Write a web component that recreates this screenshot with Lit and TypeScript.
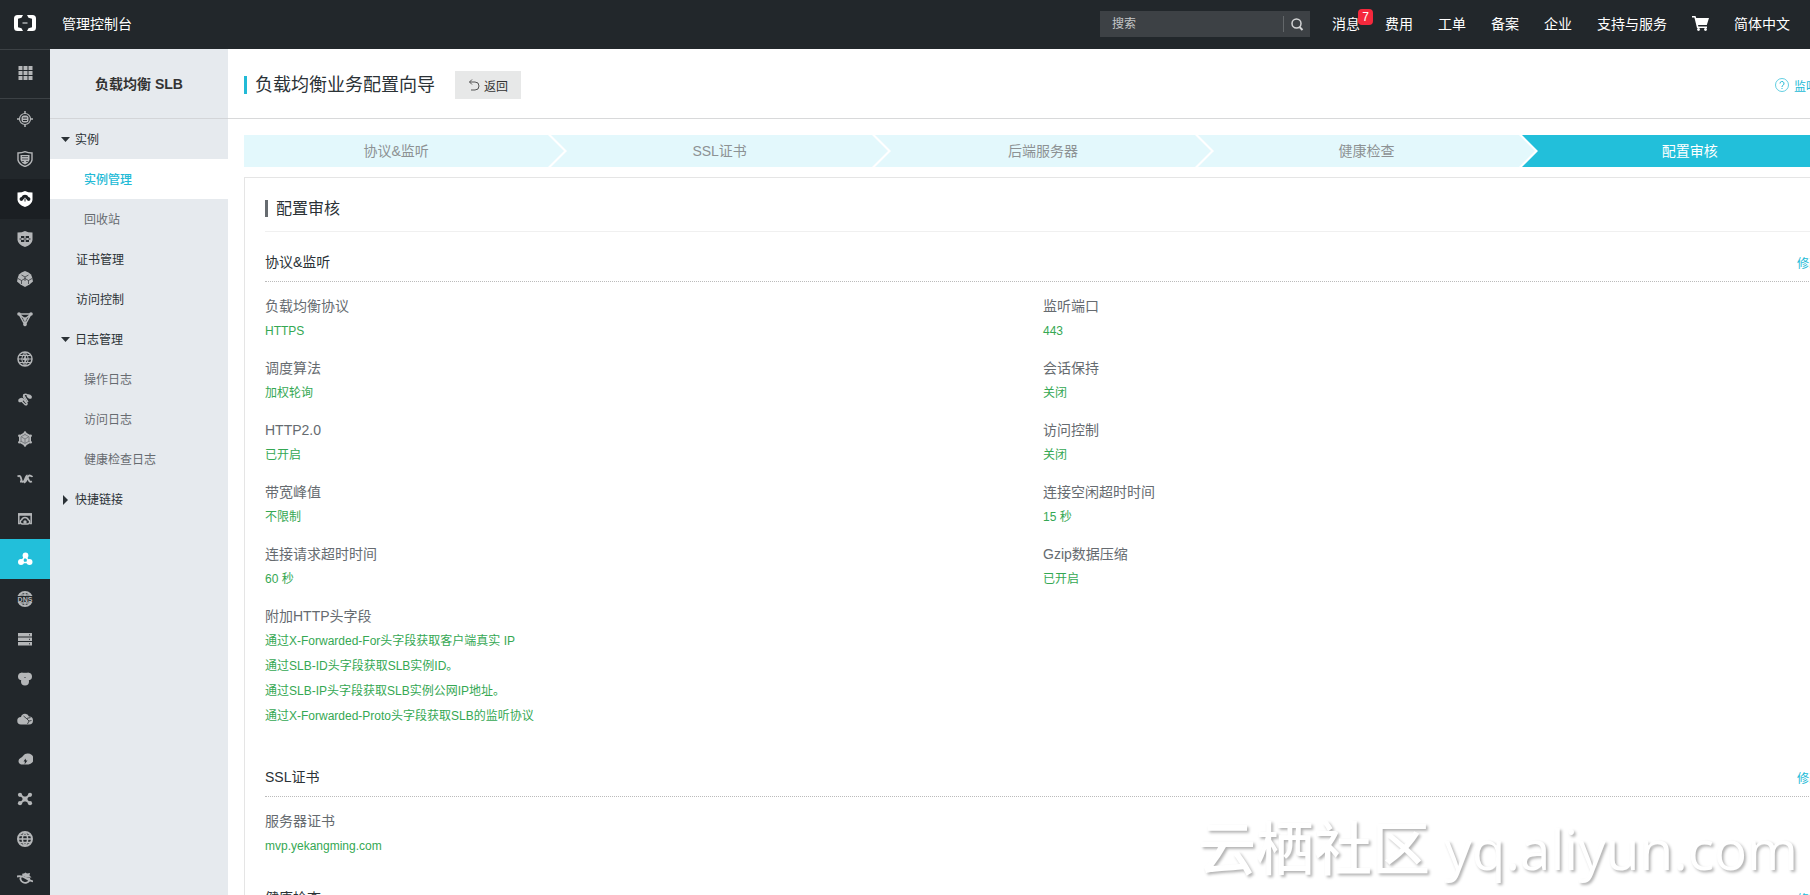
import { LitElement, html, svg, css } from "lit";
import { customElement } from "lit/decorators.js";
import { classMap } from "lit/directives/class-map.js";

type Field = { label: string; values: string[] };

const productIcons = [
  {
    name: "安全中心",
    art: svg`<circle cx="8" cy="8" r="5.500" fill="none" stroke="currentColor" stroke-width="1.200"/><path d="M8 0v3M8 13v3M0 8h3M13 8h3" stroke="currentColor" stroke-width="1.500"/><rect x="4.500" y="4.500" width="7" height="7" rx="2.500" fill="currentColor"/><path d="M6 7h4M6 9.500h4" stroke="#22272b"/>`,
  },
  {
    name: "证书服务",
    art: svg`<path d="M8 .7Q11 2 15 2v7q-1 4.500-7 6.500Q2 13.500 1 9V2Q5 2 8 .7z" fill="none" stroke="currentColor" stroke-width="1.400"/><path d="M3.500 4h9v5q-1 3-4.500 4.500Q4.500 12 3.500 9z" fill="currentColor"/><path d="M5 5.500h6M5 8h6M5 10.500h2M9 10.500h2" stroke="#22272b" stroke-width=".7"/>`,
  },
  {
    name: "云盾",
    active: "dark",
    art: svg`<path d="M8 0Q11 1.500 15.500 1.500V9Q15 13.500 8 16 1 13.500.5 9V1.500Q5 1.500 8 0z" fill="currentColor"/><path d="M3 9.500A2.500 2.500 0 0 1 4.500 6 3.800 3.800 0 0 1 11.500 6 2.500 2.500 0 0 1 13 9.500L11 10 8 6.500 5 10z" fill="#1b1f23"/><path d="M8 7.500v3" stroke="#1b1f23"/>`,
  },
  {
    name: "Web应用防火墙",
    art: svg`<path d="M8 0Q11 1.500 15.500 1.500V9Q15 13.500 8 16 1 13.500.5 9V1.500Q5 1.500 8 0z" fill="currentColor"/><path d="M4 5h3.300v2H4zM8.700 5H12v2H8.700zM4 9h3.300v2H4zM8.700 9H12v2H8.700zM2.500 7.500h2v1h-2zM6.500 7.500h3v1h-3zM11.500 7.500h2v1h-2z" fill="#22272b"/>`,
  },
  {
    name: "容器服务",
    art: svg`<path d="M8 0l3.500 1.500L14 3.500 15 6l1 4.500-3.500 3L8 16l-4.500-2.500L0 10.500 1 6l1-2.500 2.500-2z" fill="currentColor"/><path d="M4.500 4L8 6l3.500-2M8 6v4M1 7.500l3.500 2L8 7.500l3.500 2 3.500-2M4.500 9.500V13M11.500 9.500V13" fill="none" stroke="#22272b" stroke-width=".7"/>`,
  },
  {
    name: "专有网络",
    art: svg`<path d="M2 3h12L8 14zM2 3l6 5 6-5M8 8v6" fill="none" stroke="currentColor" stroke-width="1.500"/><circle cx="2" cy="3" r="1.800" fill="currentColor"/><circle cx="14" cy="3" r="1.800" fill="currentColor"/><circle cx="8" cy="8" r="1.800" fill="currentColor"/><circle cx="8" cy="13.500" r="1.800" fill="currentColor"/>`,
  },
  {
    name: "全站加速",
    art: svg`<circle cx="8" cy="8" r="7" fill="none" stroke="currentColor" stroke-width="1.500"/><path d="M1 8h14M2.500 4.500h11M2.500 11.500h11M8 1v14M8 1Q1.500 8 8 15M8 1q6.500 7 0 14" fill="none" stroke="currentColor"/><path d="M9.500 3.500L5.500 9H8l-1 4 4-5.500H8.500z" fill="currentColor"/>`,
  },
  {
    name: "高速通道",
    art: svg`<path d="M4 9.500l4 4q2 1 2-1L6.500 5.500q0-3 3-2L13 6" fill="none" stroke="currentColor" stroke-width="1.500"/><path d="M6 8l3.500 4M6.500 3.500L11 11" stroke="currentColor" stroke-width="1.300"/><ellipse cx="3.800" cy="9" rx="2.800" ry="2" transform="rotate(-30 3.800 9)" fill="currentColor"/><ellipse cx="12.300" cy="5.500" rx="2.800" ry="2" transform="rotate(30 12.300 5.500)" fill="currentColor"/>`,
  },
  {
    name: "弹性计算",
    art: svg`<path d="M8 1l6 3.500v7L8 15l-6-3.500v-7z" fill="currentColor"/><path d="M8 3.500l4 2.300v4.400l-4 2.300-4-2.300V5.800zM8 8v4M4.500 6L8 8l3.500-2M8 1v3M2 11.500L4.500 10M14 11.500L11.500 10" fill="none" stroke="#6c7073" stroke-width=".8"/><circle cx="8" cy="1.500" r="1.200" fill="currentColor"/><circle cx="2.300" cy="4.700" r="1.200" fill="currentColor"/><circle cx="13.700" cy="4.700" r="1.200" fill="currentColor"/><circle cx="2.300" cy="11.300" r="1.200" fill="currentColor"/><circle cx="13.700" cy="11.300" r="1.200" fill="currentColor"/><circle cx="8" cy="14.500" r="1.200" fill="currentColor"/>`,
  },
  {
    name: "日志服务",
    art: svg`<path d="M.5 5.500C4 3 4 8 5 10.500c3 2 3-6 5.500-6M7 11.500c3 0 3-7 5.500-7 1.500 0 2 1.500 3 .5M10 6c2 1 1 6 5 4.500M3 10.500h2" fill="none" stroke="currentColor" stroke-width="1.800"/>`,
  },
  {
    name: "云监控",
    art: svg`<path d="M3.500 12.500H1.800V3h12.400v9.500H12.500" fill="none" stroke="currentColor" stroke-width="1.500"/><path d="M1 3.500h14" stroke="currentColor" stroke-width="2.500"/><path d="M5 13a2.200 2.200 0 0 1-.3-4.200 3.500 3.500 0 0 1 6.600 0A2.200 2.200 0 0 1 11 13z" fill="none" stroke="currentColor" stroke-width="1.500"/><circle cx="8" cy="11" r="1.700" fill="currentColor"/>`,
  },
  {
    name: "负载均衡",
    active: "blue",
    art: svg`<path d="M8 5L4 11.500h9z" fill="none" stroke="currentColor" stroke-width="1.500"/><circle cx="8.500" cy="4.500" r="2.900" fill="currentColor"/><circle cx="4" cy="11" r="3" fill="currentColor"/><circle cx="12.500" cy="11" r="3" fill="currentColor"/>`,
  },
  {
    name: "云解析",
    art: svg`<circle cx="8" cy="8" r="7" fill="none" stroke="currentColor" stroke-width="2"/><path d="M8 1v14M2 4h12M2 12h12" stroke="currentColor" stroke-width="1.500"/><path d="M0 5h16v6H0z" fill="#22272b"/><text x="8" y="10.500" text-anchor="middle" font-size="7" font-weight="700" fill="currentColor">DNS</text>`,
  },
  {
    name: "云服务器",
    art: svg`<path d="M1 2h14v3.500H1zM1 6.500h14V10H1zM1 11h14v3.500H1z" fill="currentColor"/><path d="M12 3.800h1M12 8.300h1M12 12.800h1" stroke="#22272b"/>`,
  },
  {
    name: "对象存储",
    art: svg`<circle cx="4.800" cy="5.500" r="3.800" fill="currentColor"/><circle cx="11.200" cy="5.500" r="3.800" fill="currentColor"/><circle cx="8" cy="10.500" r="4" fill="currentColor"/><path d="M4 1.800h8v6H4z" fill="currentColor"/><circle cx="8" cy="6.500" r=".6" fill="#22272b"/>`,
  },
  {
    name: "CDN",
    art: svg`<path d="M4 13.500a3.700 3.700 0 0 1 0-7.500 4.200 4.200 0 0 1 8-.5 4 4 0 0 1 0 8z" fill="currentColor"/><path d="M6.500 5l3 2.500 4-1M9.500 7.500L12 10l2.500-.5M12 10l-1.500 3" fill="none" stroke="#22272b" stroke-width=".8"/>`,
  },
  {
    name: "云数据库",
    art: svg`<path d="M4 13.500a3.500 3.500 0 0 1-.5-6.500C6 6 6.500 2.500 10.500 2.500a5.200 5.200 0 0 1 1 11z" fill="currentColor"/><path d="M8.500 7.500L6.500 10.500h1.500L7.500 13.500l3-4H9z" fill="#22272b"/>`,
  },
  {
    name: "弹性伸缩",
    art: svg`<path d="M3 3.500l10 9M13 3.500l-10 9" stroke="currentColor" stroke-width="2"/><rect x="5.500" y="5.500" width="5" height="5" rx="1.500" fill="currentColor"/><circle cx="3" cy="3.800" r="2.100" fill="currentColor"/><circle cx="13" cy="3.800" r="2.100" fill="currentColor"/><circle cx="3" cy="12.200" r="2.100" fill="currentColor"/><circle cx="13" cy="12.200" r="2.100" fill="currentColor"/>`,
  },
  {
    name: "域名",
    art: svg`<circle cx="8" cy="8" r="7" fill="none" stroke="currentColor" stroke-width="2"/><path d="M1 8h14M2.500 4.500h11M2.500 11.500h11M8 1Q2.500 8 8 15M8 1q5.500 7 0 14" fill="none" stroke="currentColor" stroke-width="1.500"/>`,
  },
  {
    name: "数据传输",
    art: svg`<path d="M5 4.500l.5-2H7l1.500-1L10 2.500l3-.5-.5 2.500 2 2-5 0z" fill="currentColor"/><path d="M4 5.500a4.500 4 0 1 0 8.500 4M0 5.500q5-1 8.500 1.500t7.500 3.500" fill="none" stroke="currentColor" stroke-width="1.800"/><path d="M7 6l6 1 .5 3z" fill="currentColor"/>`,
  },
];

const navItems = [
  { text: "实例", kind: "group open" },
  { text: "实例管理", kind: "child current" },
  { text: "回收站", kind: "child" },
  { text: "证书管理", kind: "leaf" },
  { text: "访问控制", kind: "leaf" },
  { text: "日志管理", kind: "group open" },
  { text: "操作日志", kind: "child" },
  { text: "访问日志", kind: "child" },
  { text: "健康检查日志", kind: "child" },
  { text: "快捷链接", kind: "group closed" },
];

const steps = ["协议&监听", "SSL证书", "后端服务器", "健康检查", "配置审核"];

const sections: { title: string; fields: Field[] }[] = [
  {
    title: "协议&监听",
    fields: [
      { label: "负载均衡协议", values: ["HTTPS"] },
      { label: "监听端口", values: ["443"] },
      { label: "调度算法", values: ["加权轮询"] },
      { label: "会话保持", values: ["关闭"] },
      { label: "HTTP2.0", values: ["已开启"] },
      { label: "访问控制", values: ["关闭"] },
      { label: "带宽峰值", values: ["不限制"] },
      { label: "连接空闲超时时间", values: ["15 秒"] },
      { label: "连接请求超时时间", values: ["60 秒"] },
      { label: "Gzip数据压缩", values: ["已开启"] },
      {
        label: "附加HTTP头字段",
        values: [
          "通过X-Forwarded-For头字段获取客户端真实 IP",
          "通过SLB-ID头字段获取SLB实例ID。",
          "通过SLB-IP头字段获取SLB实例公网IP地址。",
          "通过X-Forwarded-Proto头字段获取SLB的监听协议",
        ],
      },
    ],
  },
  { title: "SSL证书", fields: [{ label: "服务器证书", values: ["mvp.yekangming.com"] }] },
  { title: "健康检查", fields: [] },
];

@customElement("console-topbar")
export class ConsoleTopbar extends LitElement {
  static styles = css`
    :host {
      display: flex;
      align-items: center;
      height: 48px;
      padding-bottom: 1px;
      flex: none;
      background: #22272b;
      color: #fff;
      font-size: 14px;
    }
    a {
      padding-bottom: 2px;
      color: inherit;
      text-decoration: none;
      white-space: nowrap;
    }
    svg {
      display: block;
    }
    .logo {
      display: flex;
      justify-content: center;
      width: 50px;
    }
    .title {
      margin-left: 12px;
    }
    .search {
      display: flex;
      align-items: center;
      width: 210px;
      height: 26px;
      margin-left: auto;
      background: #3d4145;
    }
    .search input {
      flex: 1;
      min-width: 0;
      height: 16px;
      padding: 0 12px;
      border: 0;
      border-right: 1px solid #63676a;
      background: none;
      color: #fff;
      font: inherit;
      font-size: 12px;
      outline: none;
    }
    .search input::placeholder {
      color: #c4c6c8;
      opacity: 1;
    }
    .search button {
      display: flex;
      justify-content: center;
      width: 26px;
      padding: 0;
      border: 0;
      background: none;
      color: #d4d5d6;
    }
    .menu {
      display: flex;
      align-items: center;
      gap: 25px;
      padding: 0 20px 0 22px;
    }
    .message {
      position: relative;
    }
    .badge {
      position: absolute;
      left: 26px;
      top: -4px;
      width: 15px;
      border-radius: 4px;
      background: #f5283c;
      font-size: 12px;
      line-height: 16px;
      text-align: center;
    }
  `;

  render() {
    return html`
      <a class="logo" href="#" aria-label="首页">
        <svg width="24" height="18" viewBox="0 0 24 18" fill="#fff">
          <path d="M10 1H4.500a3.500 3.500 0 0 0-3.500 3.500v9A3.500 3.500 0 0 0 4.500 17H10l-1.500-2.800-3.500-1v-8.400l3.500-1z" />
          <path d="M14 1h5.500A3.500 3.500 0 0 1 23 4.500v9a3.500 3.500 0 0 1-3.500 3.500H14l1.500-2.800 3.500-1v-8.400l-3.500-1z" />
          <path d="M9.500 8h5v2h-5z" fill="#888c8f" />
        </svg>
      </a>
      <a class="title" href="#">管理控制台</a>
      <form class="search" role="search">
        <input type="text" placeholder="搜索" aria-label="搜索" />
        <button type="button" aria-label="搜索">
          <svg width="14" height="14" viewBox="0 0 14 14" fill="none" stroke="currentColor">
            <circle cx="6.500" cy="6.500" r="4.500" stroke-width="1.500" />
            <path d="M9.500 10l3 3" stroke-width="2" />
          </svg>
        </button>
      </form>
      <nav class="menu">
        <a class="message" href="#">消息<span class="badge">7</span></a>
        <a href="#">费用</a>
        <a href="#">工单</a>
        <a href="#">备案</a>
        <a href="#">企业</a>
        <a href="#">支持与服务</a>
        <a href="#" aria-label="购物车">
          <svg width="17" height="15" viewBox="0 0 17 15" fill="#fff">
            <path d="M0 0h3.500l.7 2H17l-2.200 7H6l.4 1.500h8.600V12H5L2.400 1.500H0z" />
            <circle cx="6.500" cy="13.500" r="1.400" />
            <circle cx="13.500" cy="13.500" r="1.400" />
          </svg>
        </a>
        <a href="#">简体中文</a>
      </nav>
    `;
  }
}

@customElement("product-rail")
export class ProductRail extends LitElement {
  static styles = css`
    :host {
      display: block;
      flex: none;
      width: 50px;
      background: #22272b;
    }
    a {
      display: flex;
      align-items: center;
      justify-content: center;
      height: 40px;
      color: #b4b6b8;
    }
    .all {
      height: 46px;
      padding-bottom: 2px;
      border-top: 1px solid #3c4145;
      border-bottom: 1px solid #3c4145;
    }
    .dark {
      background: #1b1f23;
      color: #fff;
    }
    .blue {
      background: #22bfda;
      color: #fff;
    }
  `;

  render() {
    return html`
      <a class="all" href="#" aria-label="全部产品">
        <svg width="15" height="14" viewBox="0 0 15 14" fill="currentColor">
          ${[0, 5, 10].map((y) => [0, 5, 10].map((x) => svg`<rect x=${x + 0.5} y=${y} width="4" height="4"/>`))}
        </svg>
      </a>
      ${productIcons.map(
        (p) => html`<a class=${p.active ?? ""} href="#" aria-label=${p.name}
          ><svg width="16" height="16" viewBox="0 0 16 16">${p.art}</svg></a
        >`
      )}
    `;
  }
}

@customElement("product-nav")
export class ProductNav extends LitElement {
  static styles = css`
    :host {
      display: block;
      flex: none;
      width: 178px;
      background: #e6eaee;
      font-size: 12px;
    }
    h2 {
      height: 69px;
      margin: 0;
      border-bottom: 1px solid #d3d5d8;
      font-size: 14px;
      line-height: 70px;
      text-align: center;
      color: #333;
    }
    a {
      display: flex;
      align-items: center;
      height: 38px;
      padding-bottom: 2px;
      color: #2b3236;
      text-decoration: none;
    }
    .group {
      padding-left: 11px;
      gap: 5px;
    }
    .leaf {
      padding-left: 26px;
    }
    .child {
      padding-left: 34px;
      color: #666b70;
    }
    .current {
      background: #fff;
      color: #22bad6;
      font-weight: 500;
    }
  `;

  render() {
    return html`
      <h2>负载均衡 SLB</h2>
      <nav>
        ${navItems.map(
          (n) => html`<a class=${n.kind} href="#"
            >${n.kind.startsWith("group")
              ? html`<svg width="9" height="14" viewBox="0 0 9 14" fill="currentColor">
                  <path d=${n.kind === "group open" ? "M0 6h9L4.500 11z" : "M2 4v10L7 9z"} />
                </svg>`
              : ""}${n.text}</a
          >`
        )}
      </nav>
    `;
  }
}

@customElement("wizard-steps")
export class WizardSteps extends LitElement {
  static styles = css`
    ol {
      display: flex;
      margin: 0;
      padding: 0;
      list-style: none;
      line-height: 32px;
      font-size: 14px;
      text-align: center;
      color: #8d9294;
    }
    li {
      flex: 1;
      background: #e3f8fc;
    }
    .active {
      background: #22bfda;
      color: #fff;
    }
    .arrow {
      display: block;
      flex: none;
      width: 19px;
      height: 32px;
    }
  `;

  render() {
    return html`<ol>
      ${steps.map((s, i) => {
        const last = i === steps.length - 1;
        const next = i + 1 === steps.length - 1 ? "#22bfda" : "#e3f8fc";
        return html`<li class=${classMap({ active: last })}>${s}</li>
          ${last
            ? ""
            : html`<svg class="arrow" viewBox="0 0 19 32" aria-hidden="true">
                <path d="M0 0l16 16L0 32z" fill="#e3f8fc" />
                <path d="M3 0h16v32H3l16-16z" fill=${next} />
              </svg>`}`;
      })}
    </ol>`;
  }
}

@customElement("review-section")
export class ReviewSection extends LitElement {
  static properties = { heading: {}, fields: { attribute: false } };
  declare heading: string;
  declare fields: Field[];

  static styles = css`
    :host {
      display: block;
      padding-top: 18px;
    }
    header {
      display: flex;
      justify-content: space-between;
      align-items: center;
      padding-bottom: 9px;
      border-bottom: 1px dotted #bbb;
    }
    h4 {
      margin: 0;
      font-size: 14px;
      font-weight: 400;
      line-height: 20px;
      color: #2b3236;
    }
    a {
      font-size: 12px;
      color: #22bad6;
      text-decoration: none;
    }
    dl {
      display: grid;
      grid-template-columns: 1fr 1fr;
      row-gap: 11px;
      margin: 0;
      padding: 11px 0;
    }
    dt {
      font-size: 14px;
      line-height: 26px;
      color: #666b70;
    }
    dd {
      margin: 0;
      font-size: 12px;
      line-height: 25px;
      color: #35a853;
    }
    .multi {
      padding-bottom: 9px;
    }
  `;

  render() {
    return html`
      <header>
        <h4>${this.heading}</h4>
        <a href="#">修改</a>
      </header>
      <dl>
        ${this.fields.map(
          (f) => html`<div class=${classMap({ multi: f.values.length > 1 })}>
            <dt>${f.label}</dt>
            ${f.values.map((v) => html`<dd>${v}</dd>`)}
          </div>`
        )}
      </dl>
    `;
  }
}

@customElement("app-root")
export class AppRoot extends LitElement {
  static styles = css`
    :host {
      display: flex;
      flex-direction: column;
      position: relative;
      height: 100vh;
      overflow: hidden;
      background: #fff;
      color: #2b3236;
      font-family: "Liberation Sans", "Noto Sans CJK SC", sans-serif;
      font-size: 12px;
    }
    .body {
      display: flex;
      flex: 1;
      min-height: 0;
    }
    main {
      flex: 1;
      min-width: 0;
    }
    .page-head {
      border-bottom: 1px solid #d8d9da;
    }
    .wide {
      margin: 0 -32px 0 16px;
    }
    .head-row {
      display: flex;
      align-items: center;
      height: 66px;
      padding-top: 3px;
    }
    h1 {
      margin: 0;
      padding-left: 8px;
      border-left: 3px solid #22bad6;
      font-size: 18px;
      font-weight: 400;
      line-height: 18px;
    }
    .back {
      display: flex;
      align-items: center;
      gap: 4px;
      height: 28px;
      margin-left: 20px;
      padding: 0 13px;
      border: 0;
      background: #e7e8e8;
      color: #333;
      font: inherit;
    }
    .help {
      display: flex;
      align-items: center;
      gap: 5px;
      margin-left: auto;
      color: #22bad6;
      text-decoration: none;
    }
    wizard-steps {
      display: block;
      padding: 16px 0 10px;
    }
    .panel {
      padding: 22px 20px 40px;
      border: 1px solid #e5e5e5;
    }
    .panel-title {
      padding-bottom: 14px;
      margin-bottom: 2px;
      border-bottom: 1px solid #f0f0f0;
    }
    h3 {
      margin: 0;
      padding-left: 8px;
      border-left: 3px solid #666b70;
      font-size: 16px;
      font-weight: 400;
      line-height: 17px;
    }
    .watermark {
      position: absolute;
      right: 12px;
      bottom: 8px;
      font-family: "Open Sans", "Noto Sans CJK SC", sans-serif;
      font-size: 55px;
      line-height: 76px;
      color: #fff;
      text-shadow: 2px 2px 3px rgba(0, 0, 0, 0.3);
      white-space: nowrap;
      pointer-events: none;
    }
    .community {
      font-size: 58px;
      font-weight: 500;
    }
  `;

  render() {
    return html`
      <console-topbar></console-topbar>
      <div class="body">
        <product-rail></product-rail>
        <product-nav></product-nav>
        <main>
          <div class="page-head">
            <div class="wide head-row">
              <h1>负载均衡业务配置向导</h1>
              <button class="back" type="button">
                <svg width="12" height="12" viewBox="0 0 12 12" fill="none" stroke="#555">
                  <path d="M4 .5L1.500 3 4 5.500M1.500 3H7a4 4 0 0 1 0 8H3" />
                </svg>
                返回
              </button>
              <a class="help" href="#">
                <svg width="14" height="14" viewBox="0 0 14 14" fill="none" stroke="currentColor">
                  <circle cx="7" cy="7" r="6.500" stroke-opacity=".7" />
                  <path d="M5 5.500a2 2 0 1 1 3 1.700Q7 7.800 7 9M7 10v1" />
                </svg>
                监听介绍
              </a>
            </div>
          </div>
          <div class="wide">
            <wizard-steps></wizard-steps>
            <div class="panel">
              <div class="panel-title"><h3>配置审核</h3></div>
              ${sections.map((s) => html`<review-section .heading=${s.title} .fields=${s.fields}></review-section>`)}
            </div>
          </div>
        </main>
      </div>
      <div class="watermark"><span class="community">云栖社区</span> yq.aliyun.com</div>
    `;
  }
}
